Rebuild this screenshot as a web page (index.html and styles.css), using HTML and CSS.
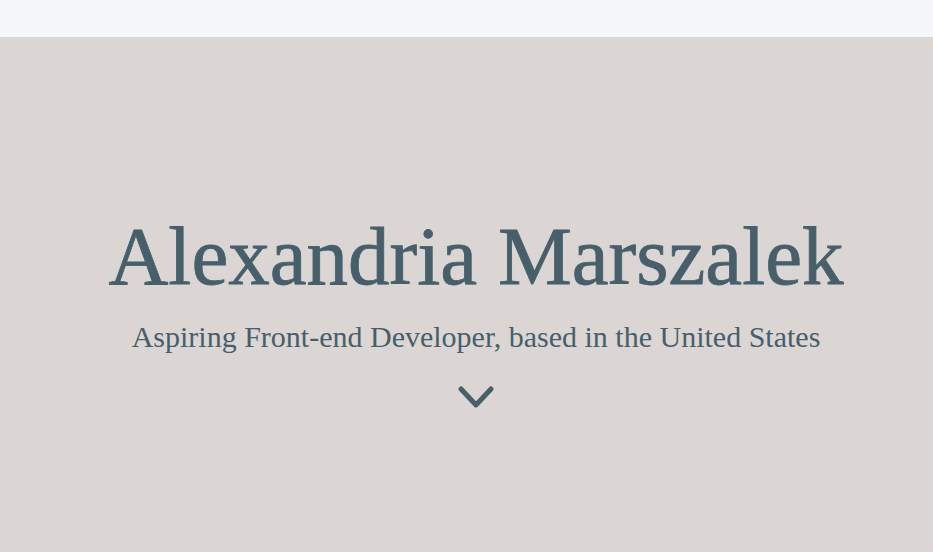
FILE: index.html
```html
<!DOCTYPE html>
<html lang="en">
<head>
<meta charset="utf-8">
<title>Alexandria Marszalek</title>
<link rel="stylesheet" href="styles.css">
</head>
<body>
<header class="topbar"></header>
<section class="hero">
  <h1 class="hero-title">Alexandria Marszalek</h1>
  <p class="hero-sub">Aspiring Front-end Developer, based in the United States</p>
  <a class="hero-down" href="#about" aria-label="Scroll down">
    <svg width="38" height="24" viewBox="0 0 38 24"><path d="M4 3 L19 19 L34 3" fill="none" stroke="#475f6b" stroke-width="5" stroke-linecap="round" stroke-linejoin="round"/></svg>
  </a>
</section>
</body>
</html>
```
FILE: styles.css
```css
html, body {
  margin: 0;
  padding: 0;
}
body {
  background: #dbd6d3;
  font-family: "Liberation Serif", "DejaVu Serif", serif;
  color: #475f6b;
  height: 552px;
  overflow: hidden;
}
.topbar {
  height: 37px;
  background: #f5f7f9;
}
.hero {
  display: flex;
  flex-direction: column;
  align-items: center;
  padding-top: 169px;
  padding-left: 19px;
}
.hero-title {
  margin: 0;
  font-size: 83px;
  font-weight: 400;
  line-height: 100px;
  -webkit-text-stroke: 0.8px #475f6b;
}
.hero-sub {
  margin: 13px 0 0;
  font-size: 30px;
  line-height: 36px;
}
.hero-down {
  margin-top: 31px;
  display: block;
  line-height: 0;
}
```
